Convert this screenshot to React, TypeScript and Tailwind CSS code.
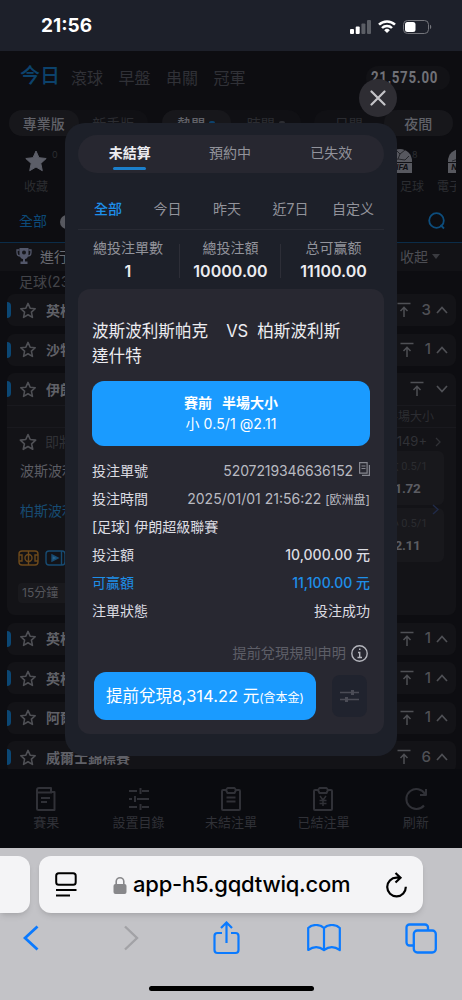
import type { ReactNode } from 'react'
import clsx from 'clsx'

const sans = 'font-[Inter,"Noto_Sans_CJK_TC",sans-serif]'

function Star({ filled = false, className }: { filled?: boolean; className?: string }) {
  return (
    <svg viewBox="0 0 24 24" className={clsx('shrink-0', className)} fill={filled ? 'currentColor' : 'none'} stroke="currentColor" strokeWidth={filled ? 1 : 2.2} strokeLinejoin="round">
      <path d="M12 2l3 6.7 7.2.8-5.4 4.9 1.5 7.3L12 18l-6.3 3.7 1.5-7.3L1.8 9.500l7.200-.8z" />
    </svg>
  )
}

function ToTop() {
  return (
    <svg width="14" height="16" viewBox="0 0 14 16" className="shrink-0" fill="none" stroke="currentColor" strokeWidth="1.5">
      <path d="M.5 1.500h13M7 15V5.500M3.500 9L7 5.300 10.500 9" />
    </svg>
  )
}

function Chevron({ down = false }: { down?: boolean }) {
  return (
    <svg width="12" height="8" viewBox="0 0 12 8" className="shrink-0" fill="none" stroke="currentColor" strokeWidth="1.7">
      <path d={down ? 'M1 1l5 5.500L11 1' : 'M1 7l5-5.500L11 7'} />
    </svg>
  )
}

function LeagueHeader({ name, count }: { name: string; count?: number }) {
  return (
    <div className="flex h-8 items-center pr-2 text-[#4f5055]">
      <div className="h-4 w-1 rounded-r-full bg-[#0b4774]" />
      <Star className="ml-2 h-[17px] w-[18px]" />
      <span className="ml-[9px] flex-1 whitespace-nowrap text-[14px] font-bold text-[#606168]">{name}</span>
      <ToTop />
      {count !== undefined ? (
        <span className="ml-[11px] mr-[5px] text-[15px] font-medium">{count}</span>
      ) : (
        <span className="w-3" />
      )}
      <Chevron down={count === undefined} />
    </div>
  )
}

function LeagueCard({ children }: { children: ReactNode }) {
  return <div className="shrink-0 overflow-hidden rounded-lg bg-[#131317]">{children}</div>
}

function StatusBar() {
  return (
    <div className="flex h-[51px] shrink-0 items-center justify-between bg-[#1d202a] pl-[41px] pr-[30px] pt-[2px]">
      <span className="text-[19px] font-bold text-white">21:56</span>
      <div className="flex items-center text-white">
        <svg width="21" height="14" viewBox="0 0 21 14" fill="currentColor">
          <rect x="0" y="9" width="4" height="5" rx="1" />
          <rect x="5.700" y="6.500" width="4" height="7.500" rx="1" />
          <rect x="11.400" y="3.500" width="4" height="10.500" rx="1" opacity=".28" />
          <rect x="17" y="0" width="4" height="14" rx="1" opacity=".28" />
        </svg>
        <svg width="18" height="13" viewBox="0 0 18 13" className="ml-[7px]" fill="none" stroke="currentColor" strokeWidth="2.500">
          <path d="M1 4.700a11.300 11.300 0 0 1 16 0M4 8a7 7 0 0 1 10 0" />
          <path d="M9 13L6.200 10.200a4 4 0 0 1 5.600 0z" fill="currentColor" stroke="none" />
        </svg>
        <svg width="29" height="14" viewBox="0 0 29 14" className="ml-[7px]">
          <rect x=".5" y=".5" width="25" height="13" rx="4" fill="none" stroke="#74757b" />
          <rect x="2" y="2" width="10.500" height="10" rx="2.500" fill="currentColor" />
          <path d="M27 4.800v4.400c1.700-.6 1.700-3.800 0-4.400z" fill="#74757b" />
        </svg>
      </div>
    </div>
  )
}

const toggles = [
  { labels: ['專業版', '新手版'], active: 0, dots: false },
  { labels: ['熱門', '時間'], active: 0, dots: true },
  { labels: ['日間', '夜間'], active: 1, dots: false },
]

const sports = [
  { badge: 'FIFA', label: '足球', offset: '-ml-3' },
  { badge: 'NBA', label: '電子', offset: 'ml-[11px]' },
]

function PageHeader() {
  return (
    <>
      <div className="flex h-[52px] items-center pl-5 pr-3 text-[16px] text-[#303137]">
        <span className="mb-[3px] mr-[11px] text-[20px] font-medium text-[#0c426c]">今日</span>
        <div className="flex flex-1 gap-[15.5px] pt-[2px]">
          <span>滾球</span>
          <span>早盤</span>
          <span>串關</span>
          <span>冠軍</span>
        </div>
        <div className="mt-[2px] flex h-6 w-[84px] items-center rounded-full bg-[#121216] pl-[5px]">
          <span className="origin-left scale-x-[0.83] font-[Roboto,sans-serif] text-[16px] font-bold tracking-[0.9px] text-[#707177]">21,575.00</span>
        </div>
      </div>
      <div className="flex h-[41px] items-center justify-between pb-px pl-[9px] pr-[9px]">
        {toggles.map(group => (
          <div key={group.labels[0]} className="flex h-[26px] w-[139px] rounded-full bg-[#101014]">
            {group.labels.map((label, i) => (
              <div
                key={label}
                className={clsx(
                  'flex flex-1 items-center justify-center rounded-full text-[14px]',
                  i === group.active ? 'bg-[#17171b] font-medium text-[#606168]' : 'text-[#2b2c31]',
                )}
              >
                {label}
                {group.dots && <i className={clsx('ml-1 h-1 w-1.5 rounded-full', i === 0 ? 'bg-[#0c426c]' : 'bg-[#2b2c31]')} />}
              </div>
            ))}
          </div>
        ))}
      </div>
      <div className="mr-1.5 flex h-[56px] justify-between overflow-hidden pl-6 text-[12px] text-[#2c2d32]">
        <div className="flex w-6 flex-col pt-[5px]">
          <div className="flex h-6 items-start">
            <Star filled className="h-6 w-6 text-[#5c5e68]" />
            <span className="ml-1 text-[9px] leading-3">0</span>
          </div>
          <span className="mt-[5px]">收藏</span>
        </div>
        <div className="-mr-[5px] flex gap-[13px] pt-[5px]">
          {sports.map(({ badge, label, offset }) => (
            <div key={label} className="flex w-6 flex-col">
              <div className="flex h-6">
                <div className={clsx('flex h-6 w-6 shrink-0 flex-col items-center overflow-hidden rounded-t-full rounded-b-md bg-[#57585f]', offset)}>
                  <svg width="24" height="13" viewBox="0 0 24 13" className="shrink-0" fill="none" stroke="#25262b">
                    <path d="M8 1l4 4 5-4M12 5l-2 5-6 2M10 10l7 1 4-4" />
                  </svg>
                  <b className="w-full border-t border-[#111115] text-center text-[8px] italic leading-[9px] text-[#111115]">{badge}</b>
                </div>
                <span className="text-[9px] leading-3">8</span>
              </div>
              <span className="mt-[5px] w-6 whitespace-nowrap">{label}</span>
            </div>
          ))}
        </div>
      </div>
      <div className="flex h-[43px] items-center border-b border-[#0b2c48] pl-[19px] pr-4">
        <span className="-mt-px flex-1 text-[14px] text-[#0c4a79]">
          全部
          <i className="ml-[13px] inline-block h-3.5 w-3.5 rounded-full bg-[#57585f] align-middle" />
        </span>
        <svg width="18" height="18" viewBox="0 0 18 18" fill="none" stroke="#0d4d7d" strokeWidth="1.800">
          <circle cx="8.500" cy="8.500" r="7.300" />
          <path d="M12.500 13l3.500 3.500" />
        </svg>
      </div>
      <div className="flex h-7 items-center bg-[#121216] pb-[2px] pl-4 pr-[22px] text-[14px] text-[#4c4d53]">
        <svg width="16" height="16" viewBox="0 0 16 16" className="mr-2" fill="#53576a">
          <path d="M3.500 0h9v6c0 3-2 5-3.500 5v2.500h2.500V16h-7v-2.500H7V11C5.500 11 3.500 9 3.500 6z" />
          <path d="M3.500 2H1v2.500C1 7 2.500 8 4.500 8M12.500 2H15v2.500C15 7 13.500 8 11.500 8" fill="none" stroke="#53576a" strokeWidth="1.300" />
          <circle cx="8" cy="4.500" r="2" fill="#16171c" />
        </svg>
        <span className="flex-1 text-[#6b6c73]">進行中</span>
        收起
        <i className="ml-1 border-x-4 border-t-[5px] border-x-transparent border-t-[#3a3b40]" />
      </div>
      <div className="flex h-[23px] items-center pb-[2px] pl-[19px] text-[14px] text-[#434449]">足球(23)</div>
    </>
  )
}

function OddsBox({ line, odds }: { line: string; odds: string }) {
  return (
    <div className="flex h-[54px] w-[70px] flex-col items-center justify-center rounded-md bg-[#18181c] pr-[3px] font-[Roboto,'Noto_Sans_CJK_TC',sans-serif]">
      <span className="text-[11px] leading-5 text-[#2b2c30]">{line}</span>
      <span className="text-[13.500px] leading-[22px] font-bold tracking-[-0.3px] text-[#5b5c62]">{odds}</span>
    </div>
  )
}

function Match() {
  return (
    <div className="h-[210px] text-[#4f5055]">
      <div className="flex h-[23px] items-center justify-end border-y border-[#19191e] pr-[22px] text-[12px] text-[#2c2d32]">半場大小</div>
      <div className="flex h-[23px] items-center pl-3 pr-[15px] pt-1 text-[13px] text-[#303136]">
        <Star className="h-[18px] w-[18px] text-[#4f5055]" />
        <span className="ml-2 flex-1 text-[14px]">即將開賽</span>
        149+
        <svg width="6" height="10" viewBox="0 0 6 10" className="ml-2" fill="none" stroke="currentColor" strokeWidth="1.300"><path d="M1 1l4 4-4 4" /></svg>
      </div>
      <div className="flex justify-between pl-[13px] pr-3">
        <div className="text-[14px]">
          <div className="mt-[8px] leading-6 text-[#5b5c63]">波斯波利斯</div>
          <div className="mt-4 leading-6 text-[#174b72]">柏斯波利斯</div>
          <div className="-ml-0.5 mt-[27px] flex gap-[6px]">
            <svg width="21" height="16" viewBox="0 0 21 16" fill="none" stroke="#6d491b" strokeWidth="1.400">
              <rect x="1" y="1" width="19" height="14" rx="3" />
              <circle cx="10.500" cy="8" r="3.500" />
              <path d="M10.500 1v14M1 5h3v6H1M20 5h-3v6h3" />
            </svg>
            <svg width="21" height="16" viewBox="0 0 21 16" fill="none" stroke="#174b72" strokeWidth="1.400">
              <rect x="1" y="1" width="19" height="14" rx="3" />
              <path d="M16.500 1v14" />
              <path d="M7 5l6 3-6 3z" fill="#2a6289" />
            </svg>
          </div>
          <div className="-ml-0.5 mt-[17px] flex h-5 w-[60px] items-center rounded bg-[#19191d] pl-1 text-[12px] text-[#55565c]">15分鐘</div>
        </div>
        <div className="relative flex flex-col gap-[3px]">
          <OddsBox line="大 0.5/1" odds="1.72" />
          <OddsBox line="小 0.5/1" odds="2.11" />
          <svg width="7" height="11" viewBox="0 0 7 11" className="absolute right-[5px] top-[53px]" fill="none" stroke="#202a48" strokeWidth="1.400"><path d="M1 1l5 4.500L1 10" /></svg>
        </div>
      </div>
    </div>
  )
}

const menu = ['賽果', '設置目錄', '未結注單', '已結注單', '刷新']

function MenuIcon({ index }: { index: number }) {
  return (
    <svg width="24" height="26" viewBox="0 0 24 26" fill="none" stroke="currentColor" strokeWidth="2" strokeLinejoin="round">
      {index === 0 && <path d="M5 2h12v4h3.500v18H4.500a1.500 1.500 0 0 1-1.500-1.500V4a2 2 0 0 1 2-2zM3 6.500h15M7 12h9M7 16h6" />}
      {index === 1 && <path d="M2 5h8m5 0h7M13.500 2v6M2 13h3m5 0h12M8 10v6M2 21h8m5 0h7M13.500 18v6" />}
      {(index === 2 || index === 3) && <path d="M8 4H4a1 1 0 0 0-1 1v18a1 1 0 0 0 1 1h16a1 1 0 0 0 1-1V5a1 1 0 0 0-1-1h-4M8.500 2h7L17 4l-1.500 3h-7L7 4z" />}
      {index === 2 && <path d="M7.500 11.500h9M7.500 15.500h9" />}
      {index === 3 && <path d="M9 10l3 4 3-4M12 13v7M8.500 14.500h7M8.500 17.500h7" strokeWidth="1.500" />}
      {index === 4 && <path d="M20 19.500A10 10 0 1 1 21 8M22 3v6h-6" />}
    </svg>
  )
}

function BottomMenu() {
  return (
    <div className="flex h-[79px] shrink-0 bg-[#0a0b0f] text-[#303137]">
      {menu.map((label, i) => (
        <div key={label} className="flex flex-1 flex-col items-center pt-[17px]">
          <MenuIcon index={i} />
          <span className="text-[13px] leading-5">{label}</span>
        </div>
      ))}
    </div>
  )
}

function Browser() {
  return (
    <div className="h-[152px] shrink-0 overflow-hidden bg-[#c3c3c7] pt-2">
      <div className="flex h-[57px] gap-[9px]">
        <div className="w-[30px] rounded-r-xl bg-[#f4f4f6] shadow-md" />
        <div className="flex w-[384px] items-center rounded-xl bg-[#f4f4f6] pl-4 pr-4 shadow-md">
          <svg width="22" height="25" viewBox="0 0 22 25" fill="none" stroke="#000" strokeWidth="2">
            <rect x="1.200" y="1.200" width="19.500" height="11.500" rx="2.500" />
            <path d="M1 18h20.500M1 23.500h14" />
          </svg>
          <svg width="14" height="18" viewBox="0 0 14 18" className="ml-9" fill="#87878a">
            <rect x=".5" y="8" width="13" height="10" rx="2" />
            <path d="M3.200 9V5.500a3.800 3.800 0 0 1 7.600 0V9" fill="none" stroke="#87878a" strokeWidth="1.600" />
          </svg>
          <span className="ml-[6px] flex-1 whitespace-nowrap text-[22px] font-medium tracking-[-0.22px] text-black">app-h5.gqdtwiq.com</span>
          <svg width="21" height="26" viewBox="0 0 21 26" fill="none" stroke="#000" strokeWidth="2.200">
            <path d="M13.500 5.700H10.500a9.300 9.300 0 1 0 9.300 9M9.500 1l5 4.700-5 4.800" />
          </svg>
        </div>
      </div>
      <div className="flex h-[50px] items-center justify-between pl-[23px] pr-[25px] text-[#0a7aff]">
        <svg width="16" height="26" viewBox="0 0 16 26" fill="none" stroke="currentColor" strokeWidth="2.800"><path d="M14.500 1.500L2 13l12.500 11.500" /></svg>
        <svg width="16" height="26" viewBox="0 0 16 26" className="ml-[26px]" fill="none" stroke="#a2a2a6" strokeWidth="2.400"><path d="M2 1.500L14 13 2 24.500" /></svg>
        <svg width="27" height="34" viewBox="0 0 27 34" className="ml-[16px]" fill="none" stroke="currentColor" strokeWidth="2.200">
          <path d="M9 12H4.500a3 3 0 0 0-3 3v14a3 3 0 0 0 3 3h18a3 3 0 0 0 3-3V15a3 3 0 0 0-3-3H18M13.500 22V2M8 7l5.500-5.500L19 7" />
        </svg>
        <svg width="34" height="28" viewBox="0 0 34 28" className="ml-[10px]" fill="none" stroke="currentColor" strokeWidth="2.200" strokeLinejoin="round">
          <path d="M17 4C13 0 5 0 1.200 4v22c5-3.500 11-3.500 15.800 0 4.800-3.500 10.800-3.500 15.800 0V4C29 0 21 0 17 4zM17 4v22" />
        </svg>
        <svg width="32" height="31" viewBox="0 0 32 31" className="ml-[6px]" fill="none" stroke="currentColor" strokeWidth="2.300">
          <rect x="8.800" y="7.500" width="22" height="22" rx="3.500" />
          <path d="M8.500 22.500H4.500a3 3 0 0 1-3-3v-15a3 3 0 0 1 3-3H20a3 3 0 0 1 3 3v3" />
        </svg>
      </div>
      <div className="mx-auto mt-[23px] h-[5px] w-[165px] rounded-full bg-black" />
    </div>
  )
}

function Row({ label, children, className }: { label: string; children?: ReactNode; className?: string }) {
  return (
    <div className={clsx('flex h-7 items-center justify-between text-[14px]', className ?? 'text-[#dcdce2]')}>
      <span>{label}</span>
      {children}
    </div>
  )
}

const stats = [
  ['總投注單數', '1'],
  ['總投注額', '10000.00'],
  ['总可赢额', '11100.00'],
]

function BetModal() {
  return (
    <div className="absolute left-[65px] top-[123px] h-[633px] w-[332px] rounded-[20px] bg-[#1d2029] px-[13px] pt-3">
      <div className="flex h-[38px] rounded-full bg-[#272730] text-[14px] text-[#92939b]">
        <div className="flex flex-1 flex-col items-center pt-2 font-bold text-[#ececf0]">
          <span className="ml-[2px] leading-5">未結算</span>
          <i className="ml-[2px] mt-1 h-[3px] w-[33px] rounded-full bg-[#1b7fcb]" />
        </div>
        <div className="flex-1 pt-2 text-center leading-5">預約中</div>
        <div className="flex-1 pr-[2px] pt-2 text-center leading-5">已失效</div>
      </div>
      <div className="mt-[15px] flex h-[42px] items-center justify-between border-b border-[#282a33] pb-px pl-4 pr-[10px] text-[14px] text-[#92939b]">
        <span className="font-medium text-[#1e8fe9]">全部</span>
        <span>今日</span>
        <span>昨天</span>
        <span>近7日</span>
        <span className="-ml-2">自定义</span>
      </div>
      <div className="flex pt-[6px]">
        {stats.map(([label, value], i) => (
          <div key={label} className={clsx('relative h-[53px] text-center text-[14px] text-[#92939b]', i === 0 ? 'w-[102px] pr-[2px]' : i === 1 ? 'w-[101px]' : 'w-[103px] pl-[2px]')}>
            <div className="leading-6">{label}</div>
            <div className="text-[16px] font-semibold leading-[22px] text-[#ececf0]">{value}</div>
            {i < 2 && <i className="absolute right-0 top-2 h-[34px] w-px bg-[#2d2e37]" />}
          </div>
        ))}
      </div>
      <div className="h-[445px] rounded-xl bg-[#282831] px-[14px] pt-[30px]">
        <h2 className="whitespace-pre-wrap text-[16.600px] leading-[25px] text-[#ececf0]">
          波斯波利斯帕克<span className="ml-[18px] mr-[9px]">VS</span>柏斯波利斯<br />達什特
        </h2>
        <div className="mt-[12px] flex h-[65px] flex-col items-center justify-center rounded-xl bg-[#1a9bff] pb-px text-[14px] leading-[21px] text-white">
          <span className="font-bold">賽前<span className="ml-[10px]">半場大小</span></span>
          <span className="tracking-[0.1px]">小 0.5/1 @2.11</span>
        </div>
        <div className="mt-[10.500px]">
          <Row label="投注單號">
            <span className="flex items-center gap-[6px] tracking-[-0.12px] text-[#b9bac1]">
              5207219346636152
              <svg width="11" height="14" viewBox="0 0 11 14" className="mb-[3px]" fill="none" stroke="#85868f" strokeWidth="1.200">
                <path d="M.6.600h7.500v10.500H.600zM10.400 3v10.400H3M2.500 4h4M2.500 6.500h4" />
              </svg>
            </span>
          </Row>
          <Row label="投注時間">
            <span className="text-[#b9bac1]">2025/01/01 21:56:22 <small className="text-[12px]">[欧洲盘]</small></span>
          </Row>
          <Row label="[足球] 伊朗超級聯賽" />
          <Row label="投注額"><span className="font-medium">10,000.00 元</span></Row>
          <Row label="可贏額" className="text-[#1e8fe9]"><span className="font-medium">11,100.00 元</span></Row>
          <Row label="注單狀態">投注成功</Row>
        </div>
        <div className="mt-[16.500px] flex h-6 items-center justify-end gap-[5px] pr-0.5 text-[14.200px] text-[#5d5e67]">
          提前兌現規則申明
          <svg width="17" height="17" viewBox="0 0 17 17" fill="none" stroke="#b4b5bc" strokeWidth="1.400">
            <circle cx="8.500" cy="8.500" r="7.700" />
            <path d="M7 7.500h1.700v5M6.500 12.500h4.500M8 4.300h1.500" />
          </svg>
        </div>
        <div className="flex items-center justify-between pl-0.5 pr-[3px] pt-[7px]">
          <button className="h-12 w-[222px] whitespace-nowrap rounded-xl bg-[#1a9bff] text-[16.500px] text-white">
            提前兌現8,314.22 元<span className="text-[12px]">(含本金)</span>
          </button>
          <button className="flex h-[42px] w-[35px] items-center justify-center rounded-lg bg-[#20232e] text-[#4b4c56]">
            <svg width="19" height="14" viewBox="0 0 19 14" fill="none" stroke="currentColor" strokeWidth="1.500">
              <path d="M0 3.500h19M0 10.500h19" />
              <path d="M12.500 1v5M6.500 8v5" strokeWidth="3" />
            </svg>
          </button>
        </div>
      </div>
    </div>
  )
}

export default function App() {
  return (
    <div className={clsx('relative flex h-[1000px] w-[462px] flex-col overflow-hidden bg-[#0d0d11]', sans)}>
      <StatusBar />
      <div className="h-[718px] shrink-0 overflow-hidden">
        <PageHeader />
        <div className="flex flex-col gap-[7.500px] pl-[7px] pr-1.5">
          <LeagueCard><LeagueHeader name="英格蘭" count={3} /></LeagueCard>
          <LeagueCard><LeagueHeader name="沙特" count={1} /></LeagueCard>
          <LeagueCard>
            <LeagueHeader name="伊朗" />
            <Match />
          </LeagueCard>
          <LeagueCard><LeagueHeader name="英格蘭" count={1} /></LeagueCard>
          <LeagueCard><LeagueHeader name="英格蘭" count={1} /></LeagueCard>
          <LeagueCard><LeagueHeader name="阿爾及" count={1} /></LeagueCard>
          <LeagueCard><LeagueHeader name="威爾士錦標賽" count={6} /></LeagueCard>
        </div>
      </div>
      <BottomMenu />
      <Browser />
      <BetModal />
      <button className="absolute left-[359px] top-[79px] flex h-[38px] w-[38px] items-center justify-center rounded-full bg-[#2e2d33]" aria-label="關閉">
        <svg width="16" height="16" viewBox="0 0 16 16" fill="none" stroke="#c4c4c8" strokeWidth="2.200" strokeLinecap="round">
          <path d="M1.500 1.500l13 13M14.500 1.500l-13 13" />
        </svg>
      </button>
    </div>
  )
}
